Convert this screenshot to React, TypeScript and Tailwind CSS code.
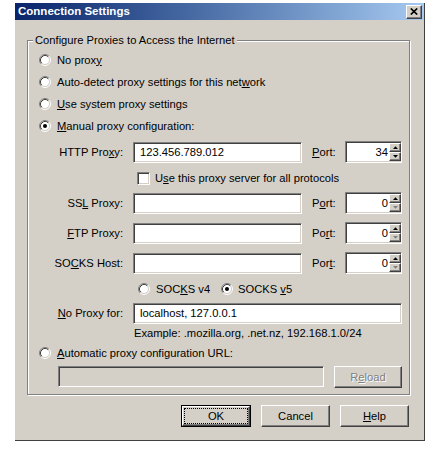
import React from 'react';

function Radio({ checked }: { checked?: boolean }) {
  return (
    <svg width="12" height="12" viewBox="0 0 12 12" className="shrink-0">
      <circle cx="6" cy="6" r="4.5" fill="#fff" />
      <path d="M2.11 9.89 A5.5 5.5 0 0 1 9.89 2.11" fill="none" stroke="#808080" strokeWidth="1" />
      <path d="M9.89 2.11 A5.5 5.5 0 0 1 2.11 9.89" fill="none" stroke="#fff" strokeWidth="1" />
      <path d="M2.82 9.18 A4.5 4.5 0 0 1 9.18 2.82" fill="none" stroke="#404040" strokeWidth="1" />
      <path d="M9.18 2.82 A4.5 4.5 0 0 1 2.82 9.18" fill="none" stroke="#d4d0c8" strokeWidth="1" />
      {checked && <circle cx="6" cy="6" r="2" fill="#000" />}
    </svg>
  );
}

function RadioRow({ checked, children }: { checked?: boolean; children: React.ReactNode }) {
  return (
    <div className="h-[22px] flex items-center pl-[11px] gap-[6px]">
      <Radio checked={checked} />
      <span>{children}</span>
    </div>
  );
}

function Field({ value, className }: { value?: string; className: string }) {
  return (
    <div className={`h-[21px] border border-[#808080] border-r-white border-b-white shadow-[inset_1px_1px_0_#404040,inset_-1px_-1px_0_#d4d0c8] flex items-center pl-[6px] ${className}`}>
      {value}
    </div>
  );
}

function Arrow({ up, off }: { up?: boolean; off?: boolean }) {
  return (
    <svg width="5" height="3" viewBox="0 0 5 3">
      <polygon points={up ? '0,3 2.5,0.2 5,3' : '0,0 2.5,2.8 5,0'} fill={off ? '#808080' : '#000'} />
    </svg>
  );
}

function SpinBtn({ up, off }: { up?: boolean; off?: boolean }) {
  return (
    <div className="flex-1 bg-[#d4d0c8] border border-white border-r-[#404040] border-b-[#404040] shadow-[inset_-1px_-1px_0_#808080] flex items-center justify-center">
      <Arrow up={up} off={off} />
    </div>
  );
}

function PortField({ value }: { value: string }) {
  const min = value === '0';
  return (
    <div className="w-[57px] h-[22px] bg-white border border-[#808080] border-r-white border-b-white shadow-[inset_1px_1px_0_#404040,inset_-1px_-1px_0_#d4d0c8] flex">
      <div className="flex-1 flex items-center justify-end pr-[1px]">{value}</div>
      <div className="w-[12px] my-[1px] flex flex-col">
        <SpinBtn up />
        <SpinBtn off={min} />
      </div>
    </div>
  );
}

function ProxyRow({ label, value, port, portLabel, className }: { label: React.ReactNode; value?: string; port: string; portLabel: React.ReactNode; className: string }) {
  return (
    <div className={`h-[22px] flex items-center ${className}`}>
      <div className="w-[95px] text-right">{label}</div>
      <Field value={value} className="ml-[10px] w-[169px] bg-white" />
      <div className="ml-[10px] w-[33px]">{portLabel}</div>
      <PortField value={port} />
    </div>
  );
}

function Button({ children, def, off, className }: { children: React.ReactNode; def?: boolean; off?: boolean; className: string }) {
  const inner = (
    <div className="relative w-full h-full border border-white border-r-[#404040] border-b-[#404040] shadow-[inset_-1px_-1px_0_#808080] flex items-center justify-center">
      {def && <div className="absolute inset-[1px] border border-dotted border-black" />}
      <span className={off ? 'text-[#808080] [text-shadow:1px_1px_0_#fff]' : ''}>{children}</span>
    </div>
  );
  return <div className={`h-[22px] ${def ? 'border border-black' : ''} ${className}`}>{inner}</div>;
}

export default function App() {
  return (
    <div className="w-[432px] h-[450px] bg-white pt-[3px] text-[11.2px] leading-[13px] text-black font-['Liberation_Sans',Arial,sans-serif]">
      <div className="ml-[15px] w-[410px] h-[438px] bg-[#d4d0c8] border-r border-b border-[#404040]">
        <div className="h-[17px] bg-linear-to-r from-[#0a246a] to-[#a6caf0] flex items-center justify-between pl-[3px] pr-[2px]">
          <span className="text-white font-bold text-[11.5px]">Connection Settings</span>
          <div className="w-[16px] h-[14px] bg-[#d4d0c8] border border-white border-r-[#404040] border-b-[#404040] shadow-[inset_-1px_-1px_0_#808080] flex items-center justify-center">
            <svg width="8" height="7" viewBox="0 0 8 7">
              <path d="M0.8 0.5 L7.2 6.5 M7.2 0.5 L0.8 6.5" stroke="#000" strokeWidth="1.7" />
            </svg>
          </div>
        </div>

        <div className="relative mt-[20px] ml-[12px] w-[383px] h-[355px] border border-[#808080] shadow-[inset_1px_1px_0_#fff,1px_1px_0_#fff]">
          <span className="absolute left-[5px] top-[-7px] px-[2px] bg-[#d4d0c8]">Configure Proxies to Access the Internet</span>

          <div className="pt-[8px]">
            <RadioRow>No prox<u>y</u></RadioRow>
            <RadioRow>Auto-detect proxy settings for this net<u>w</u>ork</RadioRow>
            <RadioRow><u>U</u>se system proxy settings</RadioRow>
            <RadioRow checked><u>M</u>anual proxy configuration:</RadioRow>

            <ProxyRow className="mt-[4px]" label={<>HTTP Pro<u>x</u>y:</>} value="123.456.789.012" portLabel={<><u>P</u>ort:</>} port="34" />

            <div className="mt-[4px] h-[22px] flex items-center pl-[109px] gap-[5px]">
              <div className="w-[13px] h-[13px] bg-white border border-[#808080] border-r-white border-b-white shadow-[inset_1px_1px_0_#404040,inset_-1px_-1px_0_#d4d0c8]" />
              <span>U<u>s</u>e this proxy server for all protocols</span>
            </div>

            <ProxyRow className="mt-[3px]" label={<>SS<u>L</u> Proxy:</>} portLabel={<>P<u>o</u>rt:</>} port="0" />
            <ProxyRow className="mt-[8px]" label={<><u>F</u>TP Proxy:</>} portLabel={<>Po<u>r</u>t:</>} port="0" />
            <ProxyRow className="mt-[8px]" label={<>SO<u>C</u>KS Host:</>} portLabel={<>Por<u>t</u>:</>} port="0" />

            <div className="mt-[4px] h-[22px] flex items-center pl-[110px]">
              <div className="w-[83px] flex items-center gap-[6px]">
                <Radio />
                <span>SOC<u>K</u>S v4</span>
              </div>
              <div className="flex items-center gap-[5px]">
                <Radio checked />
                <span>SOCKS <u>v</u>5</span>
              </div>
            </div>

            <div className="mt-[2px] h-[22px] flex items-center">
              <div className="w-[95px] text-right"><u>N</u>o Proxy for:</div>
              <Field value="localhost, 127.0.0.1" className="ml-[10px] w-[269px] bg-white" />
            </div>

            <div className="h-[18px] flex items-center pl-[106px]">Example: .mozilla.org, .net.nz, 192.168.1.0/24</div>

            <RadioRow><u>A</u>utomatic proxy configuration URL:</RadioRow>

            <div className="mt-[2px] h-[21px] flex pl-[30px]">
              <Field className="w-[266px] bg-[#d4d0c8]" />
              <Button off className="ml-[10px] w-[68px] h-[21px]">R<u>e</u>load</Button>
            </div>
          </div>
        </div>

        <div className="mt-[10px] flex pl-[166px] gap-[10px]">
          <Button def className="w-[70px]">OK</Button>
          <Button className="w-[69px]">Cancel</Button>
          <Button className="w-[69px]"><u>H</u>elp</Button>
        </div>
      </div>
    </div>
  );
}
